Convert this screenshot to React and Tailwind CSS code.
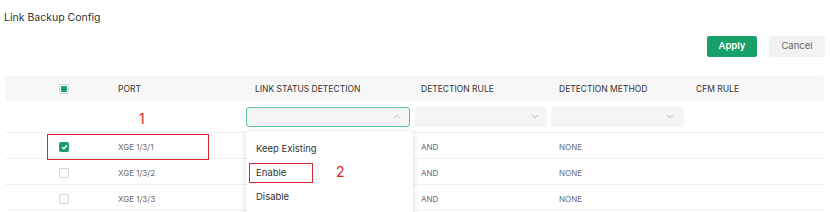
import React from 'react';

const rows = [
    { port: 'XGE 1/3/1', checked: true },
    { port: 'XGE 1/3/2', checked: false },
    { port: 'XGE 1/3/3', checked: false },
];

function Chevron({ up }) {
    return (
        <svg width="8" height="5" viewBox="0 0 8 5" className="text-[#b5b5b5]">
            <path d={up ? 'M1 4.2 L4 1.2 L7 4.2' : 'M1 0.8 L4 3.8 L7 0.8'} fill="none" stroke="currentColor" strokeWidth="1" />
        </svg>
    );
}

function Box({ checked, partial }) {
    if (checked) {
        return (
            <div className="w-[10px] h-[10px] rounded-[2px] bg-[#17a06a] flex items-center justify-center">
                <svg width="7" height="6" viewBox="0 0 7 6">
                    <path d="M1 3.1 L2.8 4.8 L6 1.2" fill="none" stroke="white" strokeWidth="1.3" />
                </svg>
            </div>
        );
    }
    if (partial) {
        return (
            <div className="w-[10px] h-[10px] rounded-[2px] border border-[#cfd8d3] bg-white flex items-center justify-center">
                <div className="w-[6px] h-[6px] bg-[#17a06a] rounded-[1px]" />
            </div>
        );
    }
    return <div className="w-[10px] h-[10px] rounded-[2px] border border-[#d6d6d6] bg-white" />;
}

export default function App() {
    const grid = 'grid grid-cols-[105px_135px_168px_136px_137px_1fr]';

    return (
        <div className="w-[830px] h-[212px] bg-white overflow-hidden relative text-[#333]" style={{ fontFamily: 'Inter, "Noto Sans", sans-serif' }}>
            {/* Title */}
            <div className="pl-[4px] pt-[11px] text-[10.5px] leading-[14px] text-[#333]">Link Backup Config</div>

            {/* Actions */}
            <div className="flex justify-end gap-[12px] pr-[5px] mt-[11px]">
                <button className="w-[50px] h-[21px] rounded-[2px] bg-[#17a06a] text-white text-[9.5px] font-semibold">Apply</button>
                <button className="w-[56px] h-[21px] rounded-[2px] bg-[#f2f2f2] text-[#666] text-[9.5px]">Cancel</button>
            </div>

            {/* Table */}
            <div className="mt-[19px] ml-[5px] mr-[6px] relative">
                {/* Header */}
                <div className={`${grid} h-[25px] bg-[#f7f7f7] rounded-t-[4px] items-center text-[8.5px] text-[#333] pt-[1px]`}>
                    <div className="pl-[54px]"><Box partial /></div>
                    <div className="pl-[8px]">PORT</div>
                    <div className="pl-[10px]">LINK STATUS DETECTION</div>
                    <div className="pl-[8px]">DETECTION RULE</div>
                    <div className="pl-[10px]">DETECTION METHOD</div>
                    <div className="pl-[10px]">CFM RULE</div>
                </div>

                {/* Filter row */}
                <div className={`${grid} h-[32px] items-center border-b border-[#efefef]`}>
                    <div />
                    <div className="pl-[29px] text-[#d9262c] text-[14px] leading-none pt-[4px]">1</div>
                    <div className="pl-[1px] pr-[3px]">
                        <div className="h-[20px] rounded-[3px] border border-[#5cc49a] bg-[#f5f5f5] flex items-center justify-end pr-[8px]">
                            <Chevron up />
                        </div>
                    </div>
                    <div className="pl-[2px] pr-[2px]">
                        <div className="h-[20px] rounded-[3px] bg-[#f5f5f5] flex items-center justify-end pr-[8px]">
                            <Chevron />
                        </div>
                    </div>
                    <div className="pl-[2px] pr-[2px]">
                        <div className="h-[20px] rounded-[3px] bg-[#f5f5f5] flex items-center justify-end pr-[10px]">
                            <Chevron />
                        </div>
                    </div>
                    <div />
                </div>

                {/* Rows */}
                {rows.map((r) => (
                    <div key={r.port} className={`${grid} h-[26px] items-center border-b border-[#efefef] text-[8px] text-[#6b6b6b] pt-[2px]`}>
                        <div className="pl-[54px]"><Box checked={r.checked} /></div>
                        <div className="pl-[8px]">{r.port}</div>
                        <div />
                        <div className="pl-[8px]">AND</div>
                        <div className="pl-[10px]">NONE</div>
                        <div />
                    </div>
                ))}

                {/* Annotation box 1 */}
                <div className="absolute left-[42px] top-[58px] w-[162px] h-[26px] border border-[#d9262c]" />

                {/* Dropdown */}
                <div className="absolute left-[241px] top-[55px] w-[167px] h-[90px] bg-white rounded-[3px] shadow-[0_1px_6px_rgba(0,0,0,0.15)] text-[9.5px] text-[#333] pt-[6px]">
                    <div className="h-[24px] flex items-center pl-[10px]">Keep Existing</div>
                    <div className="h-[24px] flex items-center pl-[10px]">Enable</div>
                    <div className="h-[24px] flex items-center pl-[10px]">Disable</div>
                </div>

                {/* Annotation box 2 */}
                <div className="absolute left-[244px] top-[87px] w-[64px] h-[20px] border border-[#d9262c]" />
                <div className="absolute left-[331px] top-[89px] text-[#d9262c] text-[14px] leading-none">2</div>
            </div>
        </div>
    );
}
